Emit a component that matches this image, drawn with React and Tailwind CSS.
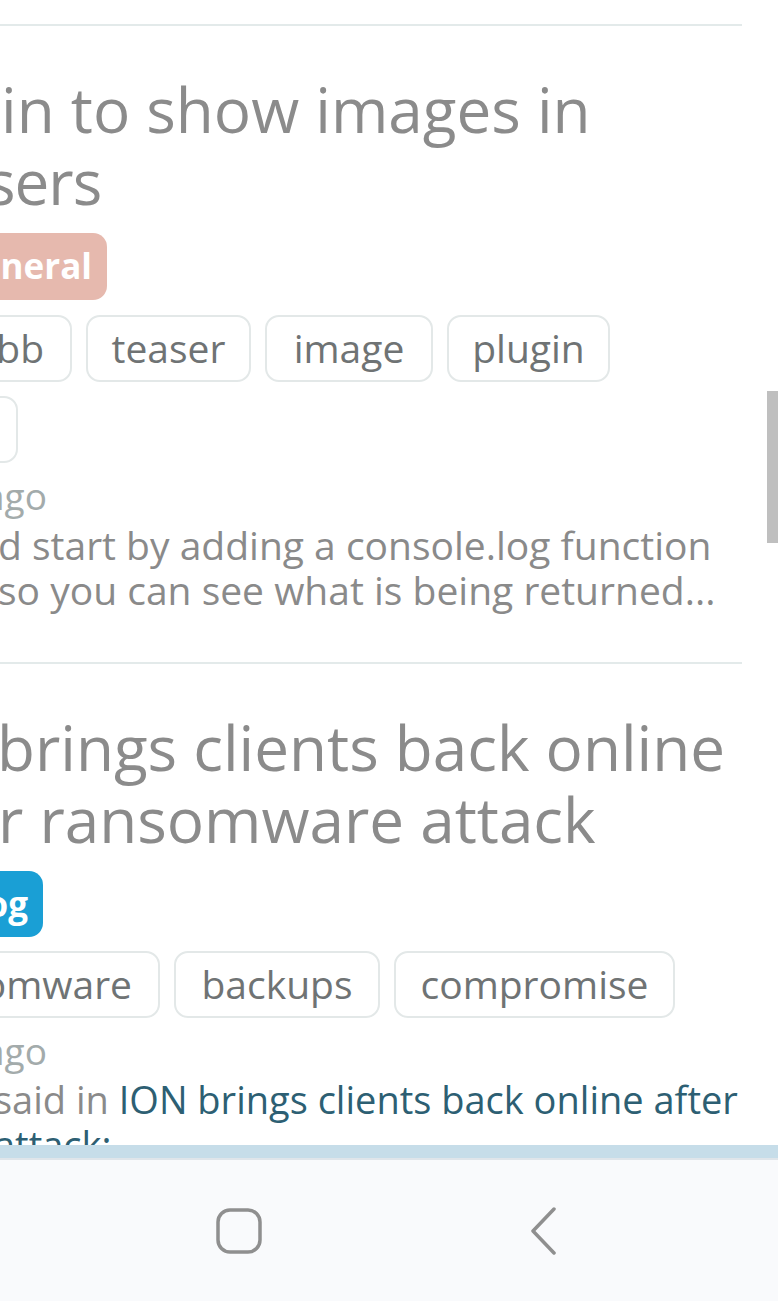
import React from 'react';

const tagCls =
  'h-[67px] shrink-0 flex items-center justify-center rounded-[14px] border-2 border-[#e3e8e8] text-[39px] text-[#6f7374] whitespace-nowrap';

function Tag({ w, children, className = '' }) {
  return (
    <div className={`${tagCls} ${className}`} style={{ width: w }}>
      {children}
    </div>
  );
}

function Divider() {
  return <div className="h-[2px] w-[742px] bg-[#e3eaea]" />;
}

export default function App() {
  return (
    <div className="relative w-[778px] h-[1301px] overflow-hidden bg-white font-['Open_Sans',sans-serif]">
      {/* feed */}
      <div className="h-[1145px] overflow-hidden">
        <div className="h-[24px]" />
        <Divider />

        {/* post 1 */}
        <div className="mt-[47px] text-[62px] leading-[72px] text-[#8b8b8b] whitespace-nowrap">
          <div className="ml-[1px]">in to show images in</div>
          <div className="-ml-[14px] tracking-[-1px]">sers</div>
        </div>
        <div className="mt-[16px] -ml-[60px] w-[167px] h-[67px] rounded-[14px] bg-[#e6b9ae] flex items-center justify-end pr-[15px] overflow-hidden">
          <span className="text-[35px] font-bold text-white whitespace-nowrap">General</span>
        </div>
        <div className="mt-[15px] -ml-[40px] flex gap-[14px]">
          <Tag w={112} className="justify-end pr-[26px]">nodebb</Tag>
          <Tag w={165}>teaser</Tag>
          <Tag w={168}>image</Tag>
          <Tag w={163}>plugin</Tag>
        </div>
        <div className="mt-[14px] -ml-[100px] flex">
          <Tag w={118}>&nbsp;</Tag>
        </div>
        <div className="mt-[10px] -ml-[16px] text-[37px] leading-[45px] text-[#a3abab] whitespace-nowrap">ago</div>
        <div className="mt-[4px] text-[39px] leading-[45px] text-[#8a8a8a] whitespace-nowrap">
          <div className="-ml-[2px]">d start by adding a console.log function</div>
          <div className="-ml-[2px]">so you can see what is being returned...</div>
        </div>
        <div className="mt-[50px]">
          <Divider />
        </div>

        {/* post 2 */}
        <div className="mt-[47px] text-[62px] leading-[72px] text-[#8b8b8b] whitespace-nowrap">
          <div className="-ml-[3px]">brings clients back online</div>
          <div className="-ml-[2px]">r ransomware attack</div>
        </div>
        <div className="mt-[16px] -ml-[60px] w-[103px] h-[66px] rounded-[14px] bg-[#1a9fd5] flex items-center justify-end pr-[15px] overflow-hidden">
          <span className="text-[35px] font-bold text-white whitespace-nowrap">Blog</span>
        </div>
        <div className="mt-[14px] -ml-[60px] flex gap-[14px]">
          <Tag w={220} className="justify-end pr-[26px]">ransomware</Tag>
          <Tag w={206}>backups</Tag>
          <Tag w={281}>compromise</Tag>
        </div>
        <div className="mt-[10px] -ml-[16px] text-[37px] leading-[45px] text-[#a3abab] whitespace-nowrap">ago</div>
        <div className="mt-[4px] text-[38px] leading-[45px] whitespace-nowrap">
          <div className="-ml-[6px]">
            <span className="text-[#8a8a8a]">said in </span>
            <span className="text-[#2d5f73]">ION brings clients back online after</span>
          </div>
          <div className="-ml-[6px] text-[#2d5f73]">attack:</div>
        </div>
      </div>

      {/* bottom strip + system nav */}
      <div className="h-[13px] bg-[#c6dde9]" />
      <div className="h-[2px] bg-[#dfe5ea]" />
      <div className="h-[141px] bg-[#f9fafc] flex items-center pl-[216px] gap-[268px]">
        <svg width="46" height="46" viewBox="0 0 46 46" fill="none">
          <rect x="2" y="2" width="42" height="42" rx="12" stroke="#8f8f8f" strokeWidth="3.5" />
        </svg>
        <svg width="26" height="48" viewBox="0 0 26 48" fill="none">
          <polyline points="24,2 3,24 24,46" stroke="#8f8f8f" strokeWidth="3.5" strokeLinecap="round" strokeLinejoin="round" />
        </svg>
      </div>

      {/* scrollbar thumb */}
      <div className="absolute right-0 top-[391px] w-[11px] h-[152px] bg-[#bfbfbf]" />
    </div>
  );
}
